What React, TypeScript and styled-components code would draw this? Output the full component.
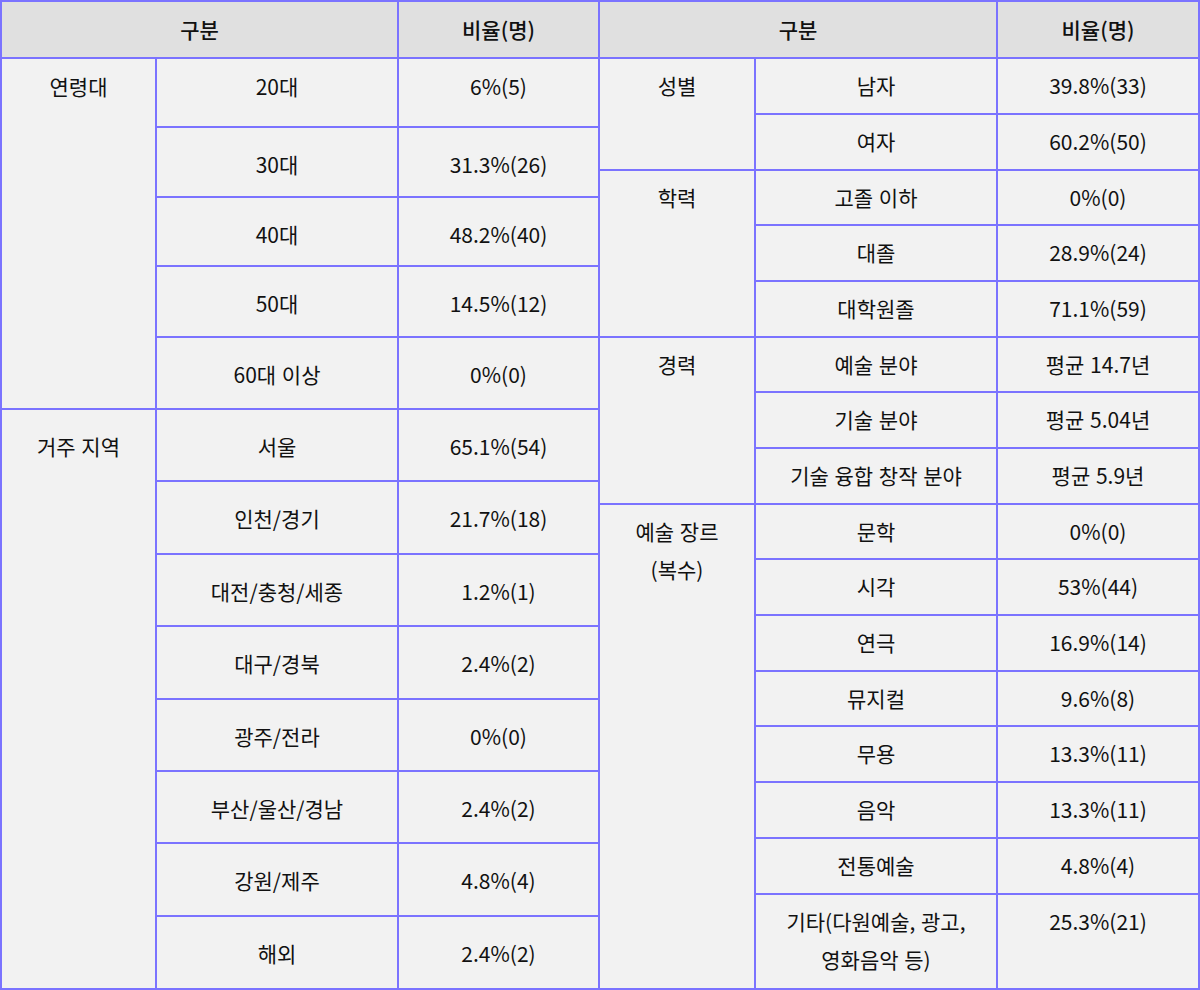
import React from "react";
import styled, { createGlobalStyle } from "styled-components";

const GlobalStyle = createGlobalStyle`
  html, body {
    margin: 0;
    padding: 0;
    background: #ffffff;
  }
  body {
    font-family: "Noto Sans CJK KR", "Noto Sans", sans-serif;
    color: #111111;
  }
`;

const LINE = "#7b73ff";

interface HalfProps {
  columns: string;
  rows: string;
  $first?: boolean;
}

const Board = styled.div`
  display: flex;
  width: 1200px;
  height: 990px;
`;

const Half = styled.div<HalfProps>`
  display: grid;
  width: 600px;
  grid-template-columns: ${(p) => p.columns};
  grid-template-rows: ${(p) => p.rows};
  border-top: 2px solid ${LINE};
  border-left: ${(p) => (p.$first ? `2px solid ${LINE}` : "none")};
`;

interface CellProps {
  $head?: boolean;
  $span?: number;
  $cols?: number;
  $pad?: number;
}

const Cell = styled.div<CellProps>`
  box-sizing: border-box;
  grid-row: span ${(p) => p.$span ?? 1};
  grid-column: span ${(p) => p.$cols ?? 1};
  border-right: 2px solid ${LINE};
  border-bottom: 2px solid ${LINE};
  background: ${(p) => (p.$head ? "#e0e0e0" : "#f2f2f2")};
  padding: ${(p) => p.$pad ?? 8}px 6px 0;
  font-size: 21px;
  line-height: 38px;
  font-weight: ${(p) => (p.$head ? 500 : 400)};
  text-align: center;
  word-spacing: 1px;
  white-space: pre-line;
`;

type Row = [string, string];
type Group = { title: string; rows: Row[] };

const leftGroups: Group[] = [
  {
    title: "연령대",
    rows: [
      ["20대", "6%(5)"],
      ["30대", "31.3%(26)"],
      ["40대", "48.2%(40)"],
      ["50대", "14.5%(12)"],
      ["60대 이상", "0%(0)"],
    ],
  },
  {
    title: "거주 지역",
    rows: [
      ["서울", "65.1%(54)"],
      ["인천/경기", "21.7%(18)"],
      ["대전/충청/세종", "1.2%(1)"],
      ["대구/경북", "2.4%(2)"],
      ["광주/전라", "0%(0)"],
      ["부산/울산/경남", "2.4%(2)"],
      ["강원/제주", "4.8%(4)"],
      ["해외", "2.4%(2)"],
    ],
  },
];

const rightGroups: Group[] = [
  {
    title: "성별",
    rows: [
      ["남자", "39.8%(33)"],
      ["여자", "60.2%(50)"],
    ],
  },
  {
    title: "학력",
    rows: [
      ["고졸 이하", "0%(0)"],
      ["대졸", "28.9%(24)"],
      ["대학원졸", "71.1%(59)"],
    ],
  },
  {
    title: "경력",
    rows: [
      ["예술 분야", "평균 14.7년"],
      ["기술 분야", "평균 5.04년"],
      ["기술 융합 창작 분야", "평균 5.9년"],
    ],
  },
  {
    title: "예술 장르\n(복수)",
    rows: [
      ["문학", "0%(0)"],
      ["시각", "53%(44)"],
      ["연극", "16.9%(14)"],
      ["뮤지컬", "9.6%(8)"],
      ["무용", "13.3%(11)"],
      ["음악", "13.3%(11)"],
      ["전통예술", "4.8%(4)"],
      ["기타(다원예술, 광고,\n영화음악 등)", "25.3%(21)"],
    ],
  },
];

interface TableProps {
  groups: Group[];
  columns: string;
  rows: string;
  first?: boolean;
  firstPad: number;
  restPad: number;
}

function Table({ groups, columns, rows, first, firstPad, restPad }: TableProps) {
  let index = 0;
  return (
    <Half columns={columns} rows={rows} $first={first}>
      <Cell $head $cols={2}>구분</Cell>
      <Cell $head>비율(명)</Cell>
      {groups.map((g) => {
        const groupPad = index === 0 ? firstPad : restPad;
        return (
          <React.Fragment key={g.title}>
            <Cell $span={g.rows.length} $pad={groupPad}>{g.title}</Cell>
            {g.rows.map(([label, value]) => {
              const pad = index === 0 ? firstPad : restPad;
              index += 1;
              return (
                <React.Fragment key={label}>
                  <Cell $pad={pad}>{label}</Cell>
                  <Cell $pad={pad}>{value}</Cell>
                </React.Fragment>
              );
            })}
          </React.Fragment>
        );
      })}
    </Half>
  );
}

export default function App() {
  return (
    <>
      <GlobalStyle />
      <Board>
        <Table
          first
          firstPad={8}
          restPad={17}
          groups={leftGroups}
          columns="155px 242px 201px"
          rows="57px 69px 70px 69px 71px 72px 72px 73px 72px 73px 72px 72px 73px 73px"
        />
        <Table
          firstPad={7}
          restPad={7}
          groups={rightGroups}
          columns="156px 242px 202px"
          rows="57px 56px 56px 55px 56px 56px 55px 56px 56px 55px 56px 56px 55px 56px 56px 56px 95px"
        />
      </Board>
    </>
  );
}
